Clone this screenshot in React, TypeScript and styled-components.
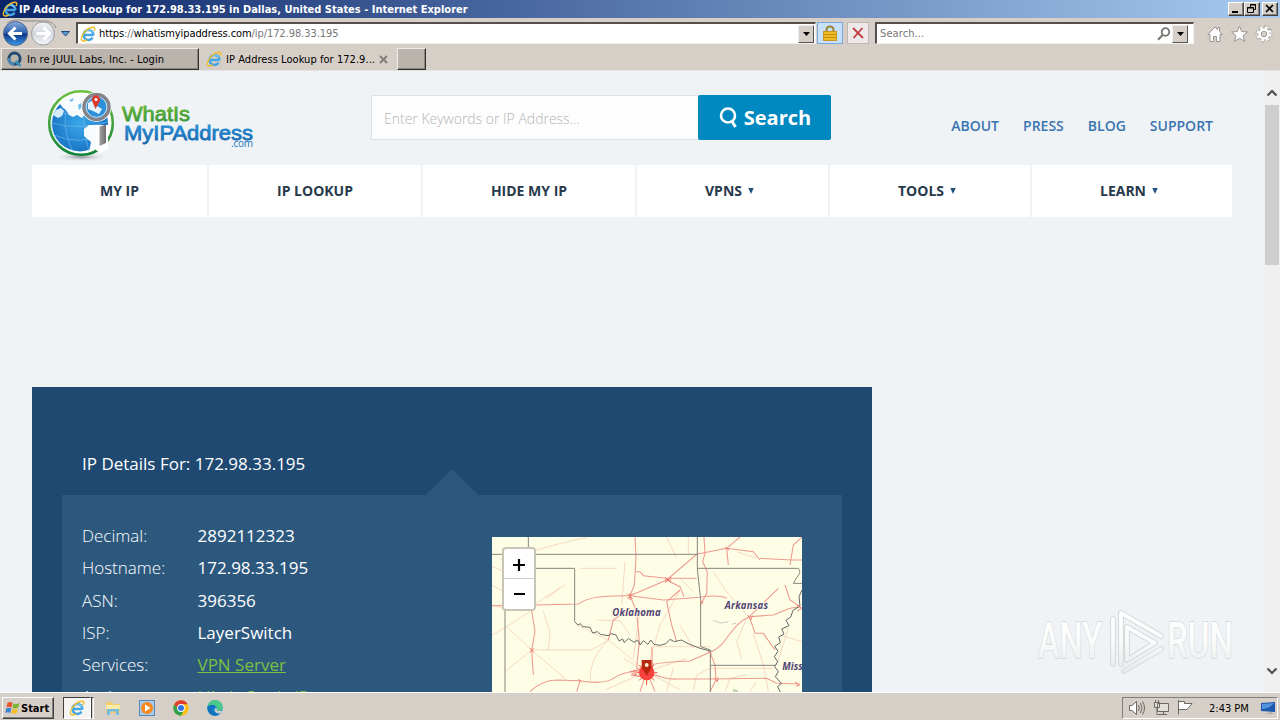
import type { ReactNode } from "react";
import styled, { createGlobalStyle } from "styled-components";

const GlobalStyle = createGlobalStyle`
  * {
    box-sizing: border-box;
  }
  body {
    margin: 0;
    overflow: hidden;
    font-family: "Open Sans", sans-serif;
  }
  svg {
    display: block;
    flex: none;
  }
`;

const Window = styled.div`
  width: 1280px;
  height: 720px;
  display: flex;
  flex-direction: column;
  background: #d6cfc7;
  overflow: hidden;
`;

// texto da interface do windows
const Ui = styled.span<{ $spacing?: number; $color?: string; $bold?: boolean }>`
  font-family: "DejaVu Sans Condensed", "DejaVu Sans", sans-serif;
  font-stretch: condensed;
  font-size: 11px;
  font-weight: ${(p) => (p.$bold ? 700 : 400)};
  letter-spacing: ${(p) => p.$spacing ?? 0}px;
  color: ${(p) => p.$color ?? "#000"};
  white-space: pre;
  line-height: 14px;
  padding-top: 1px;
`;

const TitleBar = styled.header`
  height: 18px;
  flex: none;
  display: flex;
  align-items: center;
  padding: 0 2px;
  gap: 1px;
  background: linear-gradient(90deg, #0b2569 0%, #a6caf0 100%);
`;

const WindowButtons = styled.div`
  display: flex;
  margin-left: auto;
  gap: 2px;
`;

const WindowButton = styled.div<{ $joined?: boolean }>`
  width: 16px;
  height: 14px;
  margin-right: ${(p) => (p.$joined ? -2 : 0)}px;
  background: #d6cfc7;
  border: 1px solid;
  border-color: #fff #404040 #404040 #fff;
  box-shadow: inset -1px -1px #808080;
`;

const Toolbar = styled.div`
  height: 30px;
  flex: none;
  display: flex;
  align-items: center;
  padding: 0 7px 0 2px;
`;

const Field = styled.div<{ $width: number }>`
  width: ${(p) => p.$width}px;
  flex: none;
  height: 22px;
  display: flex;
  align-items: center;
  background: #fff;
  padding: 0 1px 0 2px;
  border: 1px solid;
  border-top: 2px solid #55504b;
  border-left: 2px solid #55504b;
  border-right-color: #f4f0ec;
  border-bottom-color: #f4f0ec;
`;

const DropButton = styled.div<{ $push?: boolean }>`
  width: 16px;
  height: 18px;
  flex: none;
  margin-left: ${(p) => (p.$push ? "auto" : "1px")};
  display: flex;
  align-items: center;
  justify-content: center;
  background: #d6cfc7;
  border: 1px solid;
  border-color: #eee #555 #555 #eee;
`;

const BarButton = styled.div<{ $on?: boolean }>`
  width: ${(p) => (p.$on ? 26 : 22)}px;
  flex: none;
  height: 22px;
  display: flex;
  align-items: center;
  justify-content: center;
  border: 1px solid ${(p) => (p.$on ? "#7ba7dd" : "#bdb8b5")};
  background: ${(p) => (p.$on ? "#c7e0fb" : "#ece9e8")};
`;

const Spacer = styled.div<{ $w: number }>`
  width: ${(p) => p.$w}px;
  flex: none;
`;

const Tabs = styled.div`
  height: 23px;
  flex: none;
  display: flex;
  border-bottom: 1px solid #e4e2e0;
`;

const Tab = styled.div<{ $width: number; $active?: boolean }>`
  width: ${(p) => p.$width}px;
  height: 22px;
  display: flex;
  align-items: center;
  gap: 4px;
  padding-left: ${(p) => (p.$active ? 6 : 4)}px;
  margin-left: ${(p) => (p.$active ? 1 : 0)}px;
  background: ${(p) => (p.$active ? "#d6cfc7" : "#bbb4ac")};
  border: ${(p) => (p.$active ? "0" : "1px solid")};
  border-color: #eeebe8 #33302d #33302d #eeebe8;
  box-shadow: ${(p) => (p.$active ? "none" : "inset -1px -1px #8a847e")};
`;

const Content = styled.div`
  height: 621px;
  flex: none;
  display: flex;
  overflow: hidden;
  background: #eff3f6;
`;

const Page = styled.main`
  width: 1264px;
  padding: 17px 32px 0;
  display: flex;
  flex-direction: column;
`;

const PageHeader = styled.div`
  height: 77px;
  flex: none;
  display: flex;
  padding-left: 14px;
`;

const SearchForm = styled.div`
  display: flex;
  width: 460px;
  height: 45px;
  margin: 7px 0 0 113px;
`;

const SearchInput = styled.div`
  flex: 1;
  padding-left: 12px;
  display: flex;
  align-items: center;
  font-size: 14px;
  font-weight: 300;
  letter-spacing: -0.01px;
  color: #b6b6b6;
  background: #fdfdfd;
  border: 1px solid #dfe2e4;
  border-right: 0;
  padding-top: 2px;
`;

const SearchButton = styled.div`
  width: 133px;
  display: flex;
  align-items: center;
  justify-content: center;
  gap: 6px;
  padding-left: 1px;
  color: #fff;
  font-size: 20px;
  font-weight: 700;
  background: #0088c0;
  border-radius: 2px;
`;

const Links = styled.div`
  display: flex;
  gap: 24px;
  margin: 28px 19px 0 auto;
  color: #3a74b0;
  font-size: 14px;
  font-weight: 600;
  line-height: 20px;
`;

const Menu = styled.nav`
  display: flex;
  gap: 2px;
  height: 52px;
  flex: none;
  background: #f2f2f2;
`;

const MenuItem = styled.div<{ $width: number; $drop?: boolean }>`
  width: ${(p) => p.$width}px;
  display: flex;
  align-items: center;
  justify-content: center;
  gap: 6px;
  padding: 0 ${(p) => (p.$drop ? 6 : 0)}px 1px 0;
  background: #fff;
  color: #27394a;
  font-size: 14px;
  font-weight: 700;
`;

const Details = styled.section`
  width: 840px;
  height: 420px;
  margin-top: 170px;
  padding: 62px 30px 0;
  flex: none;
  background: #204971;
`;

const DetailsTitle = styled.div`
  height: 46px;
  padding-left: 20px;
  display: flex;
  color: #fff;
  font-size: 17px;
  line-height: 30px;
`;

const Notch = styled.svg`
  margin: 20px 364px 0 auto;
`;

const Panel = styled.div`
  height: 320px;
  display: flex;
  justify-content: space-between;
  padding: 25px 40px 0 20px;
  background: #2d587e;
`;

const Rows = styled.dl`
  margin: 0;
  display: grid;
  grid-template-columns: 115.5px auto;
  grid-auto-rows: 32.3px;
  line-height: 32.3px;
  font-size: 17px;
  color: #fff;
`;

const Label = styled.dt`
  font-weight: 300;
`;

const Value = styled.dd<{ $link?: boolean }>`
  margin: 0;
  color: ${(p) => (p.$link ? "#7ac143" : "#fff")};
  text-decoration: ${(p) => (p.$link ? "underline" : "none")};
`;

const MapBox = styled.div`
  position: relative;
  width: 310px;
  height: 300px;
  margin-top: 17px;
  overflow: hidden;
  background: #fefee6;
`;

const Zoom = styled.div`
  position: absolute;
  left: 10px;
  top: 10px;
  width: 34px;
  height: 64px;
  border: 2px solid #c6c5b6;
  border-radius: 4px;
  background: #fff;
`;

const Scrollbar = styled.div`
  width: 16px;
  display: flex;
  flex-direction: column;
  align-items: center;
  padding: 17px 0 16px;
  background: #f0f0f0;
`;

const Thumb = styled.div`
  width: 14px;
  height: 160px;
  margin: 7px 0 auto;
  background: #cdcdcd;
`;

const Watermark = styled.svg`
  position: absolute;
  left: 1030px;
  top: 604px;
`;

const Taskbar = styled.footer`
  height: 28px;
  flex: none;
  display: flex;
  align-items: center;
  padding: 3px 2px 0;
  border-top: 1px solid #fff;
`;

const StartButton = styled.div`
  width: 52px;
  height: 22px;
  display: flex;
  align-items: center;
  padding-left: 2px;
  border: 1px solid;
  border-color: #fff #404040 #404040 #fff;
  box-shadow: inset -1px -1px #808080;
`;

const TaskItem = styled.div<{ $active?: boolean }>`
  width: ${(p) => (p.$active ? 28 : 34)}px;
  height: 22px;
  display: flex;
  align-items: center;
  justify-content: center;
  background: ${(p) => (p.$active ? "#f6f4f2" : "none")};
  border: ${(p) => (p.$active ? "1px solid" : "0")};
  border-color: #404040 #fff #fff #404040;
`;

// segunda borda: ha mais de uma janela aberta
const Stack = styled.div`
  width: 3px;
  height: 22px;
  border: 1px solid;
  border-color: #404040 #fff #fff #404040;
`;

const Tray = styled.div`
  width: 156px;
  height: 22px;
  margin-left: auto;
  display: flex;
  align-items: center;
  padding: 0 1px 0 6px;
  border: 1px solid;
  border-color: #808080 #fff #fff #808080;
`;

const IeIcon = ({ size = 16 }: { size?: number }) => (
  <svg width={size} height={size} viewBox="0 0 16 16" fill="none">
    <path d="M13.6 9H4.500M13.500 9A5 5 0 1 0 12.600 11.800" stroke="#43a5e6" strokeWidth="2.500" />
    <path d="M12.500 6.500A4.500 4.500 0 0 0 4.500 6" stroke="#9fdcff" strokeWidth="1" />
    <path d="M2.400 14.800C-1 12.500 5 3 11.500 1.500C15 .7 15.500 2.500 14 5M2.400 14.800Q4.500 15.500 7 13.800" stroke="#eebf2b" strokeWidth="1.400" />
  </svg>
);

const Arrow = () => (
  <svg width="7" height="4" viewBox="0 0 7 4">
    <path d="M0 0H7L3.500 4Z" fill="#000" />
  </svg>
);

const NavButtons = () => (
  <svg width="70" height="30" viewBox="0 0 70 30">
    <defs>
      <linearGradient id="back" x2="0" y2="1">
        <stop stopColor="#8aaee0" />
        <stop offset=".48" stopColor="#2c5fae" />
        <stop offset=".52" stopColor="#0c3688" />
        <stop offset="1" stopColor="#3a9be8" />
      </linearGradient>
      <linearGradient id="fwd" x2="0" y2="1">
        <stop stopColor="#f6f6f8" />
        <stop offset=".5" stopColor="#d2d6dc" />
        <stop offset="1" stopColor="#f4f6f8" />
      </linearGradient>
    </defs>
    <path d="M5 5Q13 0 22 3H44Q52 4 54 10" fill="none" stroke="#8e8a88" />
    <circle cx="13.500" cy="15.500" r="12" fill="url(#back)" stroke="#4c648c" />
    <circle cx="41" cy="15.500" r="11.500" fill="url(#fwd)" stroke="#9b9da2" />
    <path d="M20 15.500H8M13.500 9.500L7.500 15.500L13.500 21.500" fill="none" stroke="#fff" strokeWidth="3" />
    <path d="M34.500 15.500H47M41.500 9.500L47.500 15.500L41.500 21.500" fill="none" stroke="#fff" strokeWidth="3" />
    <path d="M59.500 13.500H67.500L63.500 18Z" fill="#5b9ad0" stroke="#1c4a83" />
  </svg>
);

const Logo = () => (
  <svg width="212" height="74" viewBox="0 0 212 74">
    <defs>
      <linearGradient id="ring" x2="0" y2="1">
        <stop stopColor="#6cbf3f" />
        <stop offset="1" stopColor="#168339" />
      </linearGradient>
      <radialGradient id="sea">
        <stop stopColor="#3ba7ea" />
        <stop offset="1" stopColor="#1a77c6" />
      </radialGradient>
      <radialGradient id="shade">
        <stop stopColor="#8d9196" />
        <stop offset="1" stopColor="#eff3f6" stopOpacity="0" />
      </radialGradient>
      <linearGradient id="handle">
        <stop stopColor="#a3a1a3" />
        <stop offset="1" stopColor="#6f6e72" />
      </linearGradient>
      <linearGradient id="green" x2="0" y2="1">
        <stop stopColor="#6dbb35" />
        <stop offset="1" stopColor="#35923c" />
      </linearGradient>
      <linearGradient id="blue" x2="0" y2="1">
        <stop stopColor="#2999df" />
        <stop offset="1" stopColor="#1565ad" />
      </linearGradient>
      <clipPath id="globe">
        <circle cx="34" cy="35.500" r="29" />
      </clipPath>
    </defs>
    <ellipse cx="35" cy="69" rx="28" ry="4.500" fill="url(#shade)" />
    <circle cx="35" cy="35" r="31.800" fill="#fff" stroke="url(#ring)" strokeWidth="2.600" />
    <circle cx="34" cy="35.500" r="28" fill="url(#sea)" />
    <g clipPath="url(#globe)">
      <g fill="none" stroke="#76c0ee" strokeWidth=".6">
        <path d="M5 35Q35 43 65 33M7 24Q35 30 63 22M8 47Q32 58 62 46M23 7Q13 37 27 64M39 6Q35 35 43 64M9 15Q-3 45 20 62" />
      </g>
      <path
        d="M14 16C19 9 28 5 38 6L44 9L38 15L36 21L40 25L36 30L31 27L27 29L23 27L20 22L17 20Z"
        fill="#f7fbfd"
      />
      <path d="M7 27L10 22L15 20L18 23L16 28L12 30Z" fill="#d5ebf8" />
      <path d="M38 41L43 37L54 37L62 42L60 54L52 64L43 64L45 54L38 48Z" fill="#f7fbfd" />
      <path d="M32 17L35 15L36 19L33 22ZM23 12L28 10L26 14Z" fill="#6fbdec" />
    </g>
    <path d="M52 37H62V61L54 65L50 62V40Z" fill="#fff" />
    <path d="M53.500 38.500L60 36.500V55L53.500 58Z" fill="url(#handle)" />
    <circle cx="50.500" cy="19" r="15" fill="#fff" />
    <circle cx="50.500" cy="19" r="12.600" fill="#2d91d9" stroke="#858387" strokeWidth="3.400" />
    <circle cx="50.500" cy="19" r="10.400" fill="none" stroke="#d7e4eb" />
    <path d="M42 15L47 12L51 18L56 21L53 26L47 23L42 21Z" fill="#e3f2fb" />
    <path d="M49.500 21L46 12.800A4.200 4.200 0 1 1 54 12.800Z" fill="#dd3829" />
    <circle cx="50" cy="11.500" r="1.600" fill="#fff" />
    <g fontFamily="Liberation Sans, Arial, sans-serif" fontSize="20.500" strokeWidth=".8">
      <text x="76" y="33" textLength="68" lengthAdjust="spacingAndGlyphs" fill="url(#green)" stroke="url(#green)">
        WhatIs
      </text>
      <text x="78" y="51.500" textLength="129" lengthAdjust="spacingAndGlyphs" fill="url(#blue)" stroke="url(#blue)">
        MyIPAddress
      </text>
    </g>
    <text x="185" y="59" fontSize="10" textLength="22" fontFamily="Open Sans, sans-serif" fill="#1c73bd">
      .com
    </text>
  </svg>
);

// o viewBox usa 3 unidades por pixel
const RoadMap = () => (
  <svg width="310" height="155" viewBox="36 36 930 465" fill="none">
    <g stroke="#f6cfbc" strokeWidth="2.500">
      <path d="M60 105C120 95 200 60 320 38M36 125L75 140M165 238Q220 200 255 180M36 240L70 250M150 260L80 305L36 330M80 305L155 375L260 465M155 375L75 440M155 375L335 375L385 345" />
      <path d="M330 475Q325 400 385 345L290 300M435 110L425 240M350 285L420 287M500 440L385 345M500 440L375 495M500 440L430 400M500 440L600 495M500 440L620 400M500 440L540 300L600 195" />
      <path d="M520 365H690M560 36L590 100M625 36V90M600 160L640 200M480 255L460 400M785 400L770 350L800 280M640 495L650 450L690 430M735 500L750 460L800 450M865 500L850 420L820 325M925 310L890 420M770 80L830 100M700 140L740 200L800 270M190 260L210 320L205 375M300 130H410M690 430H880" />
      <path d="M36 180Q70 200 150 250M240 190L200 220M420 287L450 330M580 430L560 500M640 370L600 300M830 470L810 500M900 330L966 350" />
    </g>
    <g stroke="#ef9a8f" strokeWidth="3.200">
      <path d="M465 36L468 100L463 180L450 212L470 260L478 350L470 430L500 440M450 212L560 165L650 88L740 70L780 36M560 165L600 185L612 215M465 140H480L490 152L560 160H650" />
      <path d="M36 242L165 240L295 237C330 210 400 213 450 212L550 225L660 217Q715 208 740 220M672 36L675 85L668 110L682 140L680 205L662 240" />
      <path d="M154 250L165 320L155 375L160 450M400 285L385 345M400 285L450 250M515 365L518 430M600 195L560 230L575 300L590 350" />
      <path d="M150 500C180 470 210 465 230 465L300 467Q370 480 400 460T460 440H500L520 418Q560 410 630 408L690 382C740 365 750 300 808 275L880 270L930 250L960 245M500 440Q560 465 590 462H700Q800 460 860 460L890 475L960 477" />
      <path d="M690 382L705 420L708 465L690 500M808 275L825 325L850 325L885 375M808 275L895 190M740 70L745 120M740 70L820 80L840 105M915 180L930 225L960 245M930 120L940 60L966 36M300 467L290 500M500 440L480 500M500 440L525 500M840 100L935 105H966" />
    </g>
    <g stroke="#85857d" strokeWidth="3">
      <path d="M36 88H652M145 36V88M165 130H284V290M652 36V130L662 225V365L691 375M652 130H955Q966 140 950 158L940 175H966M75 250V501M691 375V501M691 421H886" />
      <path
        d="M284 290L294 300L301 296L308 305L330 307L338 324L352 320L361 328L384 332L393 326L408 330L417 348L428 342L433 353L445 340L462 352L473 345L480 360L490 347L504 358L512 345L522 358L540 361L558 356L570 343L583 350L605 345L624 356L640 362L660 370L691 378"
        stroke="#6c6d68"
      />
      <path
        d="M966 195L957 215L960 243L939 256L932 276L918 286L927 302L905 312L912 327L896 336L901 353L884 364L894 379L883 395L893 410L884 425L895 440L886 455L904 475L893 485L901 501"
        stroke="#62646a"
      />
    </g>
    <g stroke="#ee7d73" strokeWidth="3">
      <path d="M442 206L458 222M458 206L442 222M450 204V225M555 157L574 173M574 157L555 173M555 165H574M803 270L812 285L818 272M150 370L161 382M161 370L150 382M735 66L748 76M460 435L470 450L455 445M702 458L712 470L714 458M950 240L966 250L952 258M945 470L958 480L948 484M295 462L305 472M685 378L695 388M660 225L670 235M450 440L480 434M452 450L485 455" />
    </g>
    <circle cx="500" cy="443" r="23" fill="#f93f3b" />
    <path d="M470 443H532M500 410V480M478 420L522 466M478 466L522 420" stroke="#ef4c48" strokeWidth="3" />
    <path d="M485 405H515V428L500 452L485 428Z" fill="#b9260e" />
    <circle cx="500" cy="420" r="6" fill="#ffe9cd" />
    <path d="M700 286L722 294L745 290M755 298L768 294" stroke="#c4cec2" strokeWidth="3" />
    <path d="M757 492L775 496L772 501H760Z" fill="#bed1a5" />
    <g fontFamily="Open Sans, sans-serif" fontSize="29" fontStyle="italic" fontWeight="700" fill="#544475" stroke="#fefee6" strokeWidth="4" paintOrder="stroke">
      <text x="397" y="272" textLength="145">Oklahoma</text>
      <text x="734" y="251" textLength="130">Arkansas</text>
      <text x="907" y="436">Mississippi</text>
    </g>
  </svg>
);

const menu = [
  { text: "MY IP", width: 175 },
  { text: "IP LOOKUP", width: 212 },
  { text: "HIDE MY IP", width: 212 },
  { text: "VPNS", width: 191, drop: true },
  { text: "TOOLS", width: 200, drop: true },
  { text: "LEARN", width: 200, drop: true },
];

const rows: [string, ReactNode, boolean?][] = [
  ["Decimal:", "2892112323"],
  ["Hostname:", "172.98.33.195"],
  ["ASN:", "396356"],
  ["ISP:", "LayerSwitch"],
  ["Services:", "VPN Server", true],
  ["Assignment:", "Likely Static IP", true],
];

function App() {
  return (
    <Window>
      <GlobalStyle />
      <TitleBar>
        <IeIcon />
        <Ui $bold $color="#fff">
          IP Address Lookup for 172.98.33.195 in Dallas, United States - Internet Explorer
        </Ui>
        <WindowButtons>
          <WindowButton $joined>
            <svg width="14" height="12">
              <path d="M3 9H9" stroke="#000" strokeWidth="2" />
            </svg>
          </WindowButton>
          <WindowButton>
            <svg width="14" height="12" fill="none" stroke="#000">
              <path d="M5.500 4V1.500H10.500V6.500H9M5 2H11M2.500 4.500H8.500V9.500H2.500ZM2 5H9" />
            </svg>
          </WindowButton>
          <WindowButton>
            <svg width="14" height="12">
              <path d="M3 2L10 9M10 2L3 9" stroke="#000" strokeWidth="1.700" />
            </svg>
          </WindowButton>
        </WindowButtons>
      </TitleBar>

      <Toolbar>
        <NavButtons />
        <Spacer $w={4} />
        <Field $width={740}>
          <IeIcon />
          <Spacer $w={3} />
          <Ui $spacing={-0.1}>
            https
            <Ui $color="#777" $spacing={-0.1}>
              ://
            </Ui>
            whatismyipaddress.com
            <Ui $color="#777" $spacing={-0.07}>
              /ip/172.98.33.195
            </Ui>
          </Ui>
          <DropButton $push>
            <Arrow />
          </DropButton>
        </Field>
        <Spacer $w={1} />
        <BarButton $on>
          <svg width="14" height="16" viewBox="0 0 14 16">
            <path d="M3.500 8V5Q3.500 1.500 7 1.500T10.500 5V8" fill="none" stroke="#9d8434" strokeWidth="2" />
            <rect x=".5" y="6.500" width="13" height="9" fill="#edbb22" stroke="#c8961c" />
            <path d="M1 9.500H13M1 12.500H13" stroke="#c58d12" />
          </svg>
        </BarButton>
        <Spacer $w={4} />
        <BarButton>
          <svg width="12" height="12" viewBox="0 0 12 12">
            <path d="M1 1L11 11M10.500 1L1.500 11" stroke="#c43a42" strokeWidth="1.800" />
          </svg>
        </BarButton>
        <Spacer $w={6} />
        <Field $width={319}>
          <Spacer $w={1} />
          <Ui $color="#767676" $spacing={0.1}>
            Search...
          </Ui>
          <Spacer $w={233} />
          <svg width="14" height="14" viewBox="0 0 14 14" fill="none" stroke="#77736f">
            <circle cx="8.500" cy="5" r="3.800" strokeWidth="1.800" />
            <path d="M5.700 8L1 12.700" strokeWidth="2" />
          </svg>
          <DropButton>
            <Arrow />
          </DropButton>
        </Field>
        <Spacer $w={13} />
        <svg width="66" height="20" viewBox="0 -2 66 20" fill="#fff" stroke="#99938f">
          <path d="M.8 9.500L8 2L10.500 4.500V2.500H12.500V6.500L15.300 9.500H13V16.500H9.500V11.500H6.500V16.500H3V9.500Z" />
          <path d="M32.500 1.200L34.700 6.600L40.500 7L36.100 10.700L37.500 16.400L32.500 13.300L27.500 16.400L28.900 10.700L24.500 7L30.300 6.600Z" />
          <circle cx="57" cy="9" r="6.600" fill="none" strokeWidth="3.600" strokeDasharray="2.600 2.580" />
          <circle cx="57" cy="9" r="4.400" fill="none" strokeWidth="4.200" />
          <circle cx="57" cy="9" r="6.500" fill="none" stroke="#fff" strokeWidth="2.400" strokeDasharray="2.600 2.505" />
          <circle cx="57" cy="9" r="4.400" fill="none" stroke="#fff" strokeWidth="2.600" />
        </svg>
      </Toolbar>

      <Tabs>
        <Spacer $w={1} />
        <Tab $width={198}>
          <svg width="17" height="16" viewBox="0 0 16 16" fill="none">
            <circle cx="8" cy="7.700" r="5.600" stroke="#24496f" strokeWidth="3" />
            <path d="M8 13.300A5.600 5.600 0 0 1 2.500 7" stroke="#4e86b0" strokeWidth="3" />
            <path d="M9 10L14 15" stroke="#3c92bd" strokeWidth="2.500" />
          </svg>
          <Ui $spacing={0.07}>In re JUUL Labs, Inc. - Login</Ui>
        </Tab>
        <Tab $width={197} $active>
          <IeIcon />
          <Ui $spacing={0.05}>IP Address Lookup for 172.9...</Ui>
          <svg width="9" height="9" viewBox="0 0 9 9">
            <path d="M1 1L8 8M8 1L1 8" stroke="#827d78" strokeWidth="2" />
          </svg>
        </Tab>
        <Tab $width={29} />
      </Tabs>

      <Content>
        <Page>
          <PageHeader>
            <Logo />
            <SearchForm>
              <SearchInput>Enter Keywords or IP Address...</SearchInput>
              <SearchButton>
                <svg width="19" height="22" viewBox="0 0 19 22" fill="none" stroke="#fff">
                  <circle cx="9" cy="8.500" r="7" strokeWidth="2.600" />
                  <path d="M12.500 13.500L16.500 20" strokeWidth="3" />
                </svg>
                Search
              </SearchButton>
            </SearchForm>
            <Links>
              <span>ABOUT</span>
              <span>PRESS</span>
              <span>BLOG</span>
              <span>SUPPORT</span>
            </Links>
          </PageHeader>
          <Menu>
            {menu.map((item) => (
              <MenuItem key={item.text} $width={item.width} $drop={item.drop}>
                {item.text}
                {item.drop && (
                  <svg width="6" height="6" viewBox="0 0 6 6">
                    <path d="M.3 0H5.700L3 6Z" fill="#22507c" />
                  </svg>
                )}
              </MenuItem>
            ))}
          </Menu>
          <Details>
            <DetailsTitle>
              IP Details For: 172.98.33.195
              <Notch width="52" height="26" viewBox="0 0 52 26">
                <path d="M0 26L26 0L52 26Z" fill="#2d587e" />
              </Notch>
            </DetailsTitle>
            <Panel>
              <Rows>
                {rows.map(([label, value, link]) => [
                  <Label key={label}>{label}</Label>,
                  <Value key={label + "v"} $link={link}>
                    {value}
                  </Value>,
                ])}
              </Rows>
              <MapBox>
                <RoadMap />
                <Zoom>
                  <svg width="30" height="60" viewBox="0 0 30 60">
                    <path d="M9 16H21M15 10V22M10 45H21" stroke="#000" strokeWidth="2.200" />
                    <path d="M0 29.500H30" stroke="#ccc" />
                  </svg>
                </Zoom>
              </MapBox>
            </Panel>
          </Details>
        </Page>
        <Scrollbar>
          <svg width="12" height="10" viewBox="0 0 12 10">
            <path d="M1.500 7.500L6 3L10.500 7.500" fill="none" stroke="#505050" strokeWidth="2.200" />
          </svg>
          <Thumb />
          <svg width="12" height="10" viewBox="0 0 12 10">
            <path d="M1.500 2.500L6 7L10.500 2.500" fill="none" stroke="#505050" strokeWidth="2.200" />
          </svg>
        </Scrollbar>
      </Content>

      <Taskbar>
        <StartButton>
          <svg width="16" height="16" viewBox="0 0 16 16">
            <path d="M2.500 3Q5 1 7.500 3L6.500 7.500Q4 6 1.500 7.500Z" fill="#e8542c" />
            <path d="M8.500 3.500Q11 5 14.500 3L13.300 7.500Q10 9 7.500 8Z" fill="#79b52d" />
            <path d="M1.300 8.500Q4 7 6.300 8.500L5.300 13Q3 11.500 .3 13Z" fill="#3983d0" />
            <path d="M7.300 9Q10 10 13 8.500L11.800 13Q9 14.500 6.200 13Z" fill="#f5bd29" />
          </svg>
          <Ui $bold>Start</Ui>
        </StartButton>
        <Spacer $w={9} />
        <TaskItem $active>
          <IeIcon />
        </TaskItem>
        <Stack />
        <Spacer $w={2} />
        <TaskItem>
          <svg width="16" height="16" viewBox="0 0 16 16">
            <path d="M1 2H7L8 4H15V13H1Z" fill="#efce6b" />
            <path d="M1 5H15V9H1Z" fill="#fbecaa" />
            <path d="M2 15V9H14V15H11V11.500H5V15Z" fill="#76bce2" />
          </svg>
        </TaskItem>
        <TaskItem>
          <svg width="16" height="16" viewBox="0 0 16 16">
            <rect x=".5" y=".5" width="15" height="15" fill="#a9cbea" stroke="#5787b8" />
            <circle cx="8" cy="8" r="6" fill="#f58a1f" />
            <path d="M6 4.500L11.500 8L6 11.500Z" fill="#fff" />
          </svg>
        </TaskItem>
        <TaskItem>
          <svg width="16" height="16" viewBox="0 0 16 16">
            <circle cx="8" cy="8" r="7.700" fill="#fbc116" />
            <path d="M1.300 4.200A7.700 7.700 0 0 1 14.700 4.200H8L5 9.500Z" fill="#e33b2e" />
            <path d="M1.300 4.200A7.700 7.700 0 0 0 8 15.700L11 10L5 9.500Z" fill="#2fa04e" />
            <circle cx="8" cy="8" r="3.900" fill="#fff" />
            <circle cx="8" cy="8" r="3" fill="#3474e0" />
          </svg>
        </TaskItem>
        <TaskItem>
          <svg width="16" height="16" viewBox="0 0 16 16">
            <circle cx="8" cy="8" r="7.700" fill="#1785d3" />
            <path d="M.5 7A7.600 7.600 0 0 1 15.700 8Q15.500 11 12 11Q9 11 10 8.500Q9 4.500 4.500 5Q1.500 5.500 .5 7Z" fill="#4cc88a" />
            <path d="M.5 7Q4 3.500 8 5.500Q6 7 6 10Q7 14 12 14.700A7.700 7.700 0 0 1 .5 7Z" fill="#1371bd" />
            <path d="M10 8.500Q9 11 12 11H15L13.500 13.500Q8 13.500 7.500 10Q8 7.500 10 8.500Z" fill="#d6cfc7" />
          </svg>
        </TaskItem>
        <Tray>
          <svg width="66" height="16" viewBox="0 0 66 16" fill="#fff" stroke="#6b6865">
            <path d="M.5 5.500H3L7.500 1.500V14.500L3 10.500H.5Z" />
            <path d="M9.500 5Q11 8 9.500 11M11.500 3Q14.500 8 11.500 13M13.500 1.500Q17.500 8 13.500 14.500" fill="none" />
            <path d="M28.500 3.500H39.500V11.500H28.500ZM31 14.500H38M34.500 12V14M25.500 2.500H30.500V7.500H25.500ZM26.500 2V0M29.500 2V0M28 8V14.500H31" fill="#e3e0dc" />
            <path d="M49.500 0V14.500M49.500 1.500H55.500V3.500H63L60.500 6.500L58 9.500H49.500" />
          </svg>
          <Spacer $w={14} />
          <Ui>2:43 PM</Ui>
          <Spacer $w={11} />
          <svg width="16" height="14" viewBox="0 0 16 14">
            <path d="M1 2L15 1V11L1 10Z" fill="#1b58ae" />
            <path d="M2 3L14 2Q9 8 2 8Z" fill="#5395df" />
            <path d="M5 13L11 11L14 13Z" fill="#a8aaa9" />
          </svg>
        </Tray>
      </Taskbar>

      <Watermark width="210" height="74" viewBox="0 0 210 74">
        <defs>
          <linearGradient id="mark" gradientUnits="userSpaceOnUse" x1="0" y1="8" x2="0" y2="68">
            <stop stopColor="#fff" />
            <stop offset=".5" stopColor="#fafbfb" />
            <stop offset="1" stopColor="#e6e9ea" />
          </linearGradient>
        </defs>
        <g fill="url(#mark)" stroke="#d3d6d8" strokeWidth="1.400" paintOrder="stroke" fontFamily="Roboto, sans-serif" fontWeight="500" fontSize="50">
          <text x="8" y="54" textLength="64" lengthAdjust="spacingAndGlyphs">
            ANY
          </text>
          <text x="137" y="54" textLength="66" lengthAdjust="spacingAndGlyphs">
            RUN
          </text>
        </g>
        <g fill="none" strokeLinejoin="round" strokeLinecap="round">
          <path d="M83 15V60M91 9L131 32M91 9V60M97 23L125 39L97 56ZM94 67L131 45" stroke="#d0d4d6" strokeWidth="5.500" />
          <path d="M83 15V60M91 9L131 32M91 9V60M97 23L125 39L97 56ZM94 67L131 45" stroke="url(#mark)" strokeWidth="3.800" />
        </g>
      </Watermark>
    </Window>
  );
}

export default App;
